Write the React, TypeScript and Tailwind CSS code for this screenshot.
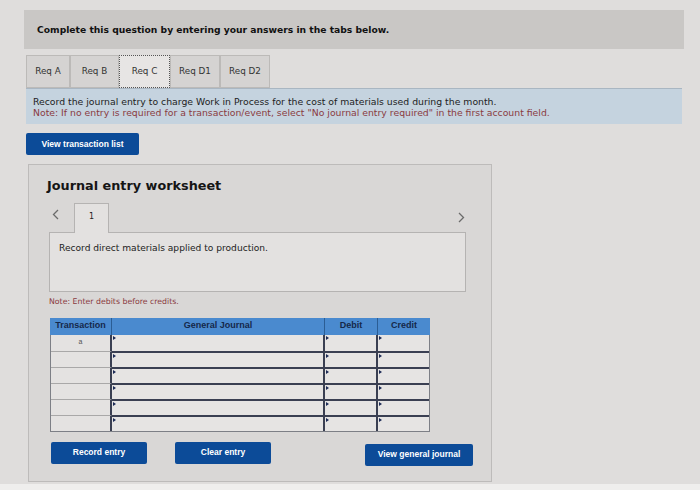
import React from "react";

const sans = "font-['DejaVu_Sans',Verdana,sans-serif]";
const arial = "font-['Liberation_Sans',Arial,sans-serif]";

const TABS = [
  { label: "Req A", w: "w-[44px]" },
  { label: "Req B", w: "w-[49px]" },
  { label: "Req C", w: "w-[51px]", active: true },
  { label: "Req D1", w: "w-[50px]" },
  { label: "Req D2", w: "w-[50px]" },
];

function BlueButton({ label, className }: { label: string; className: string }) {
  return (
    <div
      className={`flex h-[22px] items-center justify-center rounded-[2px] bg-[#0c4b98] text-[8.5px] font-bold text-white ${arial} ${className}`}
    >
      {label}
    </div>
  );
}

function Chevron({ dir }: { dir: "left" | "right" }) {
  return (
    <svg width="8" height="11" viewBox="0 0 8 11" className="text-[#6b6b6b]">
      <polyline
        points={dir === "left" ? "6,1 1.5,5.5 6,10" : "2,1 6.5,5.5 2,10"}
        fill="none"
        stroke="currentColor"
        strokeWidth="1.3"
      />
    </svg>
  );
}

// ── Journal table: 6 rows, transaction + account/debit/credit inputs ──
function JournalTable() {
  const rows = ["a", "", "", "", "", ""];
  return (
    <div className={`ml-[21px] mt-[10px] w-[380px] ${arial}`}>
      <div className="flex h-[17px] bg-[#4a8acf] text-[9px] font-bold text-[#15284a]">
        <div className="flex w-[62px] items-center justify-center border-r border-[#2b5d94]">
          Transaction
        </div>
        <div className="flex w-[213px] items-center justify-center border-r border-[#2b5d94]">
          General Journal
        </div>
        <div className="flex w-[53px] items-center justify-center border-r border-[#2b5d94]">
          Debit
        </div>
        <div className="flex flex-1 items-center justify-center">Credit</div>
      </div>
      <div className="border border-t-0 border-[#7d7f86]">
        {rows.map((r, i) => (
          <div key={i} className="flex h-[16px]">
            <div
              className={`flex w-[61px] items-center justify-center border-r-2 border-[#3a3f52] bg-[#e4e2e1] text-[7px] text-[#555] ${
                i > 0 ? "border-t border-t-[#a9a8a8]" : ""
              }`}
            >
              {r}
            </div>
            {["w-[213px]", "w-[53px]", "flex-1"].map((w, j) => (
              <div
                key={j}
                className={`relative ${w} bg-[#e6e4e3] ${j < 2 ? "border-r-2 border-[#3a3f52]" : ""} ${
                  i > 0 ? "border-t-2 border-t-[#3a3f52]" : ""
                }`}
              >
                <span className="absolute left-[1px] top-[1px] h-0 w-0 border-y-[2px] border-l-[3px] border-y-transparent border-l-[#1c2a55]" />
              </div>
            ))}
          </div>
        ))}
      </div>
    </div>
  );
}

export default function App() {
  return (
    <div className={`relative h-[490px] w-[700px] overflow-hidden bg-[#dfdddc] pt-[10px] ${sans}`}>
      <div className="ml-[24px] flex h-[39px] w-[660px] items-center bg-[#c9c7c5] pl-[13px] text-[9.2px] font-bold text-[#111]">
        Complete this question by entering your answers in the tabs below.
      </div>

      <div className="ml-[26px] mt-[6px] flex h-[33px] items-stretch">
        {TABS.map((t) => (
          <div
            key={t.label}
            className={`flex ${t.w} items-center justify-center text-[8.8px] text-[#333] ${
              t.active
                ? "border border-dotted border-[#555] bg-[#e7e5e4]"
                : "border border-[#bcbab8] bg-[#d5d3d2]"
            }`}
          >
            {t.label}
          </div>
        ))}
      </div>

      <div className="ml-[26px] flex h-[36px] w-[656px] flex-col justify-center border-t border-[#a9b6c2] bg-[#c5d3df] pl-[7px] text-[9.3px] leading-[11px]">
        <div className="text-[#1d1d1d]">
          Record the journal entry to charge Work in Process for the cost of materials used during the month.
        </div>
        <div className="text-[#8a3b3f]">
          Note: If no entry is required for a transaction/event, select "No journal entry required" in the first account field.
        </div>
      </div>

      <BlueButton label="View transaction list" className="ml-[26px] mt-[9px] w-[113px]" />

      <div className="ml-[28px] mt-[9px] h-[318px] w-[464px] border border-[#bdbbba] bg-[#d9d7d6]">
        <div className="ml-[18px] mt-[13px] text-[12.8px] font-bold leading-[16px] text-[#151515]">
          Journal entry worksheet
        </div>

        <div className="ml-[20px] mr-[26px] mt-[9px] flex h-[29px] items-end">
          <div className="mb-[12px] ml-[3px] w-[22px]">
            <Chevron dir="left" />
          </div>
          <div className="relative top-[1px] flex h-[30px] w-[35px] items-center justify-center border border-b-0 border-[#b5b3b2] bg-[#e3e1e0] pb-[4px] text-[8px] text-[#222]">
            1
          </div>
          <div className="mb-[9px] ml-auto">
            <Chevron dir="right" />
          </div>
        </div>

        <div className="ml-[20px] h-[60px] w-[417px] border border-[#b5b3b2] bg-[#e3e1e0] pl-[9px] pt-[9px] text-[9.1px] text-[#222]">
          Record direct materials applied to production.
        </div>

        <div className="ml-[20px] mt-[4px] text-[7.8px] text-[#8a3b3f]">Note: Enter debits before credits.</div>

        <JournalTable />

        <div className="mt-[10px] flex">
          <BlueButton label="Record entry" className="ml-[22px] w-[96px]" />
          <BlueButton label="Clear entry" className="ml-[28px] w-[96px]" />
          <BlueButton label="View general journal" className="ml-[94px] mt-[2px] w-[108px]" />
        </div>
      </div>
      <div className="mt-[2px] h-[8px] bg-[#efeeed]" />
    </div>
  );
}
